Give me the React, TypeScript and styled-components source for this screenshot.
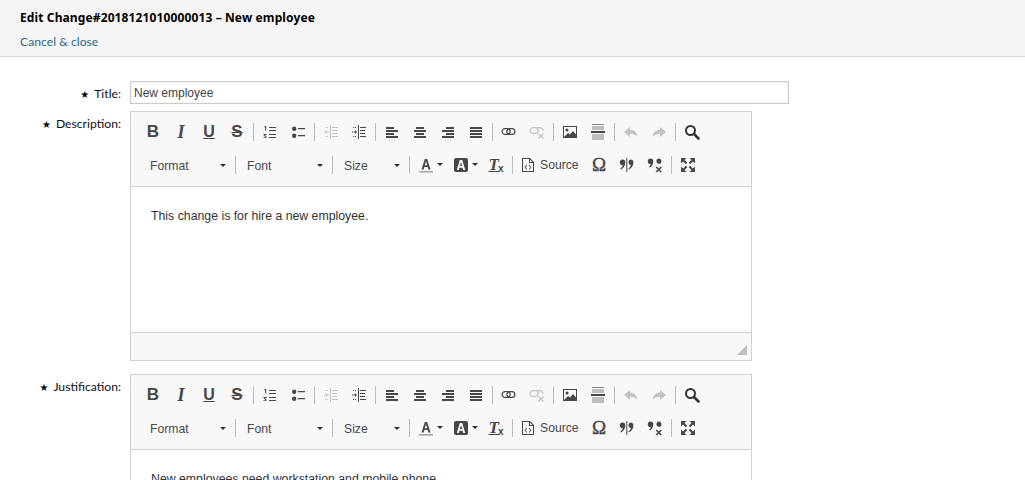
import React from 'react';
import styled, { createGlobalStyle } from 'styled-components';

const GlobalStyle = createGlobalStyle`
  html, body {
    margin: 0;
    height: 100%;
    overflow: hidden;
    background: #fff;
  }
  body {
    font-family: "Lato", "Noto Sans", sans-serif;
    font-size: 12.2px;
    color: #000;
  }
`;

const Header = styled.header`
  height: 57px;
  box-sizing: border-box;
  background: #f5f5f5;
  border-bottom: 1px solid #ddd;
  padding: 9px 20px 0;
`;

const Heading = styled.h1`
  margin: 0;
  font-family: "Noto Sans", sans-serif;
  font-size: 12px;
  line-height: 17px;
  font-weight: 700;
  letter-spacing: 0.12px;
  color: #000;
`;

const CancelLink = styled.a`
  display: block;
  margin-top: 7px;
  line-height: 17px;
  color: #2d6a85;
  text-decoration: none;
`;

const Form = styled.main`
  padding-top: 24px;
  display: flex;
  flex-direction: column;
`;

const Row = styled.div<{ $gap: number }>`
  display: flex;
  align-items: flex-start;
  margin-bottom: ${p => p.$gap}px;
`;

const Label = styled.label`
  width: 121px;
  margin-right: 9px;
  padding-top: 4px;
  box-sizing: border-box;
  display: flex;
  justify-content: flex-end;
  align-items: baseline;
  line-height: 17px;
  color: #111;
`;

const Star = styled.span`
  font-family: "DejaVu Sans", sans-serif;
  font-size: 10px;
  margin-right: 5px;
  color: #000;
`;

const TextInput = styled.input`
  width: 659px;
  height: 23px;
  box-sizing: border-box;
  border: 1px solid #ccc;
  box-shadow: inset 0 0 2px rgba(0, 0, 0, 0.12);
  padding: 1px 3px 0;
  margin: 0;
  font-family: "Liberation Sans", sans-serif;
  font-size: 12px;
  color: #444;
  outline: none;
`;

const Editor = styled.div`
  width: 622px;
  height: 250px;
  box-sizing: border-box;
  border: 1px solid #d1d1d1;
  display: flex;
  flex-direction: column;
  font-family: "Liberation Sans", sans-serif;
`;

const Toolbar = styled.div`
  height: 75px;
  box-sizing: border-box;
  padding: 3px 0 0 8px;
  background: #f8f8f8;
  border-bottom: 1px solid #d1d1d1;
`;

const ToolRow = styled.div`
  height: 33px;
  display: flex;
  align-items: center;
`;

const ToolButton = styled.span<{ $off?: boolean }>`
  width: 28px;
  height: 24px;
  flex: none;
  display: flex;
  align-items: center;
  justify-content: center;
  color: #474747;
  opacity: ${p => (p.$off ? 0.3 : 1)};
`;

const Letter = styled.span<{ $serif?: boolean; $italic?: boolean; $size?: number; $line?: string; $light?: boolean }>`
  font-family: ${p => (p.$serif ? '"Liberation Serif"' : '"Liberation Sans"')}, serif;
  font-size: ${p => p.$size ?? 17}px;
  font-weight: ${p => (p.$light ? 400 : 700)};
  font-style: ${p => (p.$italic ? 'italic' : 'normal')};
  text-decoration: ${p => p.$line ?? 'none'};
  text-decoration-thickness: 1px;
  text-underline-offset: 1px;
  line-height: 16px;
  color: #474747;
  -webkit-text-stroke: ${p => (p.$light ? '0.4px #474747' : '0')};
`;

const Sep = styled.span`
  width: 5px;
  height: 18px;
  flex: none;
  display: flex;
  justify-content: center;
  &::after {
    content: '';
    width: 1px;
    background: #bcbcbc;
  }
`;

const Combo = styled.span<{ $width: number; $left: number }>`
  width: ${p => p.$width}px;
  padding: 2px 7px 0 ${p => p.$left}px;
  box-sizing: border-box;
  flex: none;
  display: flex;
  justify-content: space-between;
  align-items: center;
  color: #484848;
  font-size: 12.2px;
`;

const Caret = styled.i`
  width: 0;
  height: 0;
  flex: none;
  border-left: 3px solid transparent;
  border-right: 3px solid transparent;
  border-top: 3px solid #2f2f2f;
`;

const ColorButton = styled.span`
  width: 35px;
  padding-left: 6px;
  box-sizing: border-box;
  flex: none;
  display: flex;
  align-items: center;
  gap: 3px;
`;

const SourceButton = styled.span`
  width: 70px;
  padding-left: 5px;
  box-sizing: border-box;
  flex: none;
  display: flex;
  align-items: center;
  gap: 4px;
  font-size: 12.2px;
  color: #484848;
`;

const ClearFormat = styled.span`
  display: flex;
  align-items: flex-end;
`;

const Sub = styled.span`
  font-family: "Liberation Sans", sans-serif;
  font-size: 10px;
  font-weight: 700;
  line-height: 8px;
  margin-left: -1px;
  color: #474747;
`;

const Body = styled.div`
  flex: 1;
  padding: 21px 20px 19px;
  font-size: 12.3px;
  line-height: 17px;
  color: #333;
  background: #fff;
`;

const BottomBar = styled.div`
  height: 28px;
  box-sizing: border-box;
  background: #f8f8f8;
  border-top: 1px solid #d1d1d1;
  display: flex;
  justify-content: flex-end;
  align-items: flex-end;
  padding: 0 4px 5px 0;
`;

const Grip = styled.span`
  width: 10px;
  height: 10px;
  background: #bdbdbd;
  clip-path: polygon(100% 0, 100% 100%, 0 100%);
`;

const Svg: React.FC<{ children: React.ReactNode }> = ({ children }) => (
  <svg width="16" height="16" viewBox="0 0 16 16" fill="#474747">{children}</svg>
);

const OrderedIcon = () => (
  <Svg>
    <path d="M3 2h1.200v4.500h-1V3.200H2zM1.500 10h3.200v.9H2.900L4.700 12.800v1H1.500v-.9h1.900L1.500 10.900z" />
    <path d="M7 3h7v1H7zM7 6h7v1H7zM7 10h7v1H7zM7 13h7v1H7z" />
  </Svg>
);

const BulletIcon = () => (
  <Svg>
    <circle cx="4.200" cy="4.700" r="2.200" />
    <circle cx="4.200" cy="11.700" r="2.200" />
    <path d="M8 4h7v1.300H8zM8 11h7v1.300H8z" />
  </Svg>
);

const OutdentIcon = () => (
  <Svg>
    <path d="M7 1h1v14H7zM9 3h6v1H9zM9 6h5v1H9zM9 9h5v1H9zM9 12h6v1H9z" />
    <path d="M1 7.500h1.500v1H1zM3.500 7.500H6v1H3.500zM3.500 6l-2 2 2 2zM2 3h1v1H2zM4 3h1v1H4zM2 12h1v1H2zM4 12h1v1H4z" />
  </Svg>
);

const IndentIcon = () => (
  <Svg>
    <path d="M7 1h1v14H7zM9 3h6v1H9zM9 6h5v1H9zM9 9h5v1H9zM9 12h6v1H9z" />
    <path d="M1 7.500h1.500v1H1zM3 7.500h2v1H3zM4 6l2 2-2 2zM2 3h1v1H2zM4 3h1v1H4zM2 12h1v1H2zM4 12h1v1H4z" />
  </Svg>
);

const AlignIcon: React.FC<{ rows: [number, number][] }> = ({ rows }) => (
  <Svg>
    {rows.map(([x, w], i) => (
      <rect key={i} x={x} y={3 + i * 3} width={w} height="2" />
    ))}
  </Svg>
);

const LinkIcon = () => (
  <Svg>
    <g fill="none" stroke="#474747" strokeWidth="1.200">
      <rect x="1.100" y="4.600" width="8" height="5.800" rx="2.900" />
      <rect x="5.900" y="4.600" width="8" height="5.800" rx="2.900" />
    </g>
  </Svg>
);

const UnlinkIcon = () => (
  <Svg>
    <g fill="none" stroke="#474747" strokeWidth="1.200">
      <rect x="1.100" y="3.600" width="8" height="5.800" rx="2.900" />
      <path d="M8 3.600h3a3 3 0 0 1 3 3" />
      <path d="M9.500 9.500l5 5M14.500 9.500l-5 5" />
    </g>
  </Svg>
);

const ImageIcon = () => (
  <Svg>
    <path fillRule="evenodd" d="M1 2h14v12H1zM2 3v10h12V3z" />
    <circle cx="5" cy="6" r="1.500" />
    <path d="M2 13l4-4 2 1.500L11 7l3 3.500V13z" />
  </Svg>
);

const RuleIcon = () => (
  <Svg>
    <g opacity="0.65">
      <path d="M2 0h12v1H2zM2 2.500h12v1H2zM2 4.500h12v1H2zM2 10.500h12v1H2zM2 12.500h12v1H2zM2 14.500h12v1H2z" />
    </g>
    <path d="M1 7h14v2H1z" />
  </Svg>
);

const UndoIcon = () => (
  <Svg>
    <path d="M7 3L1 8l6 5V9.800c3 0 5.500.7 7.500 3-.5-4-3-7-7.500-7.300z" />
  </Svg>
);

const RedoIcon = () => (
  <Svg>
    <path d="M9 3l6 5-6 5V9.800c-3 0-5.500.7-7.500 3C2 8.800 4.500 5.800 9 5.500z" />
  </Svg>
);

const SearchIcon = () => (
  <Svg>
    <circle cx="6.500" cy="6.500" r="4.500" fill="none" stroke="#333" strokeWidth="2" />
    <path d="M10 10l4.500 4.500" stroke="#333" strokeWidth="2.500" strokeLinecap="round" />
  </Svg>
);

const TextColorIcon = () => (
  <svg width="16" height="16" viewBox="0 0 16 16">
    <rect x="1" y="14" width="14" height="1.600" fill="#a8a8a8" />
    <path d="M6.800 2h2.400l3.300 10.500h-2.100l-.7-2.400H6.300l-.7 2.400H3.500zM6.800 8.300h2.400L8 4.300z" fill="#474747" fillRule="evenodd" />
  </svg>
);

const BackColorIcon = () => (
  <svg width="16" height="16" viewBox="0 0 16 16">
    <rect x="1" y="1" width="14" height="14" rx="2" fill="#474747" />
    <path d="M6.800 3h2.400l3 10h-2l-.6-2.200H6.400L5.800 13h-2zM6.900 9.100h2.200L8 5z" fill="#fff" fillRule="evenodd" />
  </svg>
);

const SourceIcon = () => (
  <Svg>
    <path fillRule="evenodd" d="M2 1h8l4 4v10H2zM3 2v12h10V6H9V2zM10 2.500V5h2.500z" />
    <path d="M7 7.500v1.200L5.500 10.300 7 11.900v1.100L4.500 10.300zM9 7.500v1.200l1.500 1.600L9 11.900v1.100l2.500-2.700z" />
  </Svg>
);

const QuoteIcon = () => (
  <Svg>
    <path d="M3.500 2.500A2.800 2.800 0 0 1 6.300 5.300c0 3.500-1.800 6-4.500 7.200l-.5-1c1.400-.8 2.200-2 2.400-3.400A2.800 2.800 0 0 1 3.500 2.500zM11.500 2.500a2.900 2.900 0 0 1 2.900 2.800c0 3.500-1.800 6-4.500 7.200l-.5-1c1.400-.8 2.200-2 2.400-3.400a2.900 2.900 0 0 1-.3-5.600z" />
    <path d="M7.300 1h1v14h-1z" />
  </Svg>
);

const UnquoteIcon = () => (
  <Svg>
    <path d="M3.500 1.500A2.800 2.800 0 0 1 6.300 4.300c0 3-1.500 5-3.500 6.200l-.6-1c1-.7 1.500-1.500 1.500-2.400a2.800 2.800 0 0 1-.2-5.600zM11.500 1.500a2.800 2.800 0 0 1 1.200 5.400l-2-.3a2.800 2.800 0 0 1 .8-5.100z" />
    <path d="M9.200 10l5 5M14.200 10l-5 5" stroke="#474747" strokeWidth="1.600" />
  </Svg>
);

const MaximizeIcon = () => (
  <Svg>
    <path d="M1 1h5.500L1 6.500zM15 1v5.500L9.500 1zM1 15V9.500L6.500 15zM15 15H9.500L15 9.500z" />
    <path d="M3 3l3.500 3.500M13 3L9.500 6.500M3 13l3.500-3.500M13 13L9.500 9.500" stroke="#474747" strokeWidth="2" />
  </Svg>
);

const RichTextEditor: React.FC<{ text: string }> = ({ text }) => (
  <Editor>
    <Toolbar>
      <ToolRow>
        <ToolButton><Letter>B</Letter></ToolButton>
        <ToolButton><Letter $serif $italic $size={18}>I</Letter></ToolButton>
        <ToolButton><Letter $size={16} $line="underline">U</Letter></ToolButton>
        <ToolButton><Letter $size={17} $line="line-through">S</Letter></ToolButton>
        <Sep />
        <ToolButton><OrderedIcon /></ToolButton>
        <ToolButton><BulletIcon /></ToolButton>
        <Sep />
        <ToolButton $off><OutdentIcon /></ToolButton>
        <ToolButton><IndentIcon /></ToolButton>
        <Sep />
        <ToolButton><AlignIcon rows={[[2, 8], [2, 12], [2, 8], [2, 12]]} /></ToolButton>
        <ToolButton><AlignIcon rows={[[4, 8], [2, 12], [4, 8], [2, 12]]} /></ToolButton>
        <ToolButton><AlignIcon rows={[[6, 8], [2, 12], [6, 8], [2, 12]]} /></ToolButton>
        <ToolButton><AlignIcon rows={[[2, 12], [2, 12], [2, 12], [2, 12]]} /></ToolButton>
        <Sep />
        <ToolButton><LinkIcon /></ToolButton>
        <ToolButton $off><UnlinkIcon /></ToolButton>
        <Sep />
        <ToolButton><ImageIcon /></ToolButton>
        <ToolButton><RuleIcon /></ToolButton>
        <Sep />
        <ToolButton $off><UndoIcon /></ToolButton>
        <ToolButton $off><RedoIcon /></ToolButton>
        <Sep />
        <ToolButton><SearchIcon /></ToolButton>
      </ToolRow>
      <ToolRow>
        <Combo $width={94} $left={11}>Format<Caret /></Combo>
        <Sep />
        <Combo $width={92} $left={9}>Font<Caret /></Combo>
        <Sep />
        <Combo $width={72} $left={9}>Size<Caret /></Combo>
        <Sep />
        <ColorButton><TextColorIcon /><Caret /></ColorButton>
        <ColorButton><BackColorIcon /><Caret /></ColorButton>
        <ToolButton>
          <ClearFormat>
            <Letter $serif $italic $line="underline">T</Letter>
            <Sub>x</Sub>
          </ClearFormat>
        </ToolButton>
        <Sep />
        <SourceButton><SourceIcon />Source</SourceButton>
        <ToolButton><Letter $serif $light $size={19}>Ω</Letter></ToolButton>
        <ToolButton><QuoteIcon /></ToolButton>
        <ToolButton><UnquoteIcon /></ToolButton>
        <Sep />
        <ToolButton><MaximizeIcon /></ToolButton>
      </ToolRow>
    </Toolbar>
    <Body>{text}</Body>
    <BottomBar><Grip /></BottomBar>
  </Editor>
);

export default function App() {
  return (
    <>
      <GlobalStyle />
      <Header>
        <Heading>Edit Change#2018121010000013 – New employee</Heading>
        <CancelLink href="#">Cancel &amp; close</CancelLink>
      </Header>
      <Form>
        <Row $gap={7}>
          <Label><Star>★</Star>Title:</Label>
          <TextInput defaultValue="New employee" />
        </Row>
        <Row $gap={13}>
          <Label><Star>★</Star>Description:</Label>
          <RichTextEditor text="This change is for hire a new employee." />
        </Row>
        <Row $gap={13}>
          <Label><Star>★</Star>Justification:</Label>
          <RichTextEditor text="New employees need workstation and mobile phone." />
        </Row>
      </Form>
    </>
  );
}
